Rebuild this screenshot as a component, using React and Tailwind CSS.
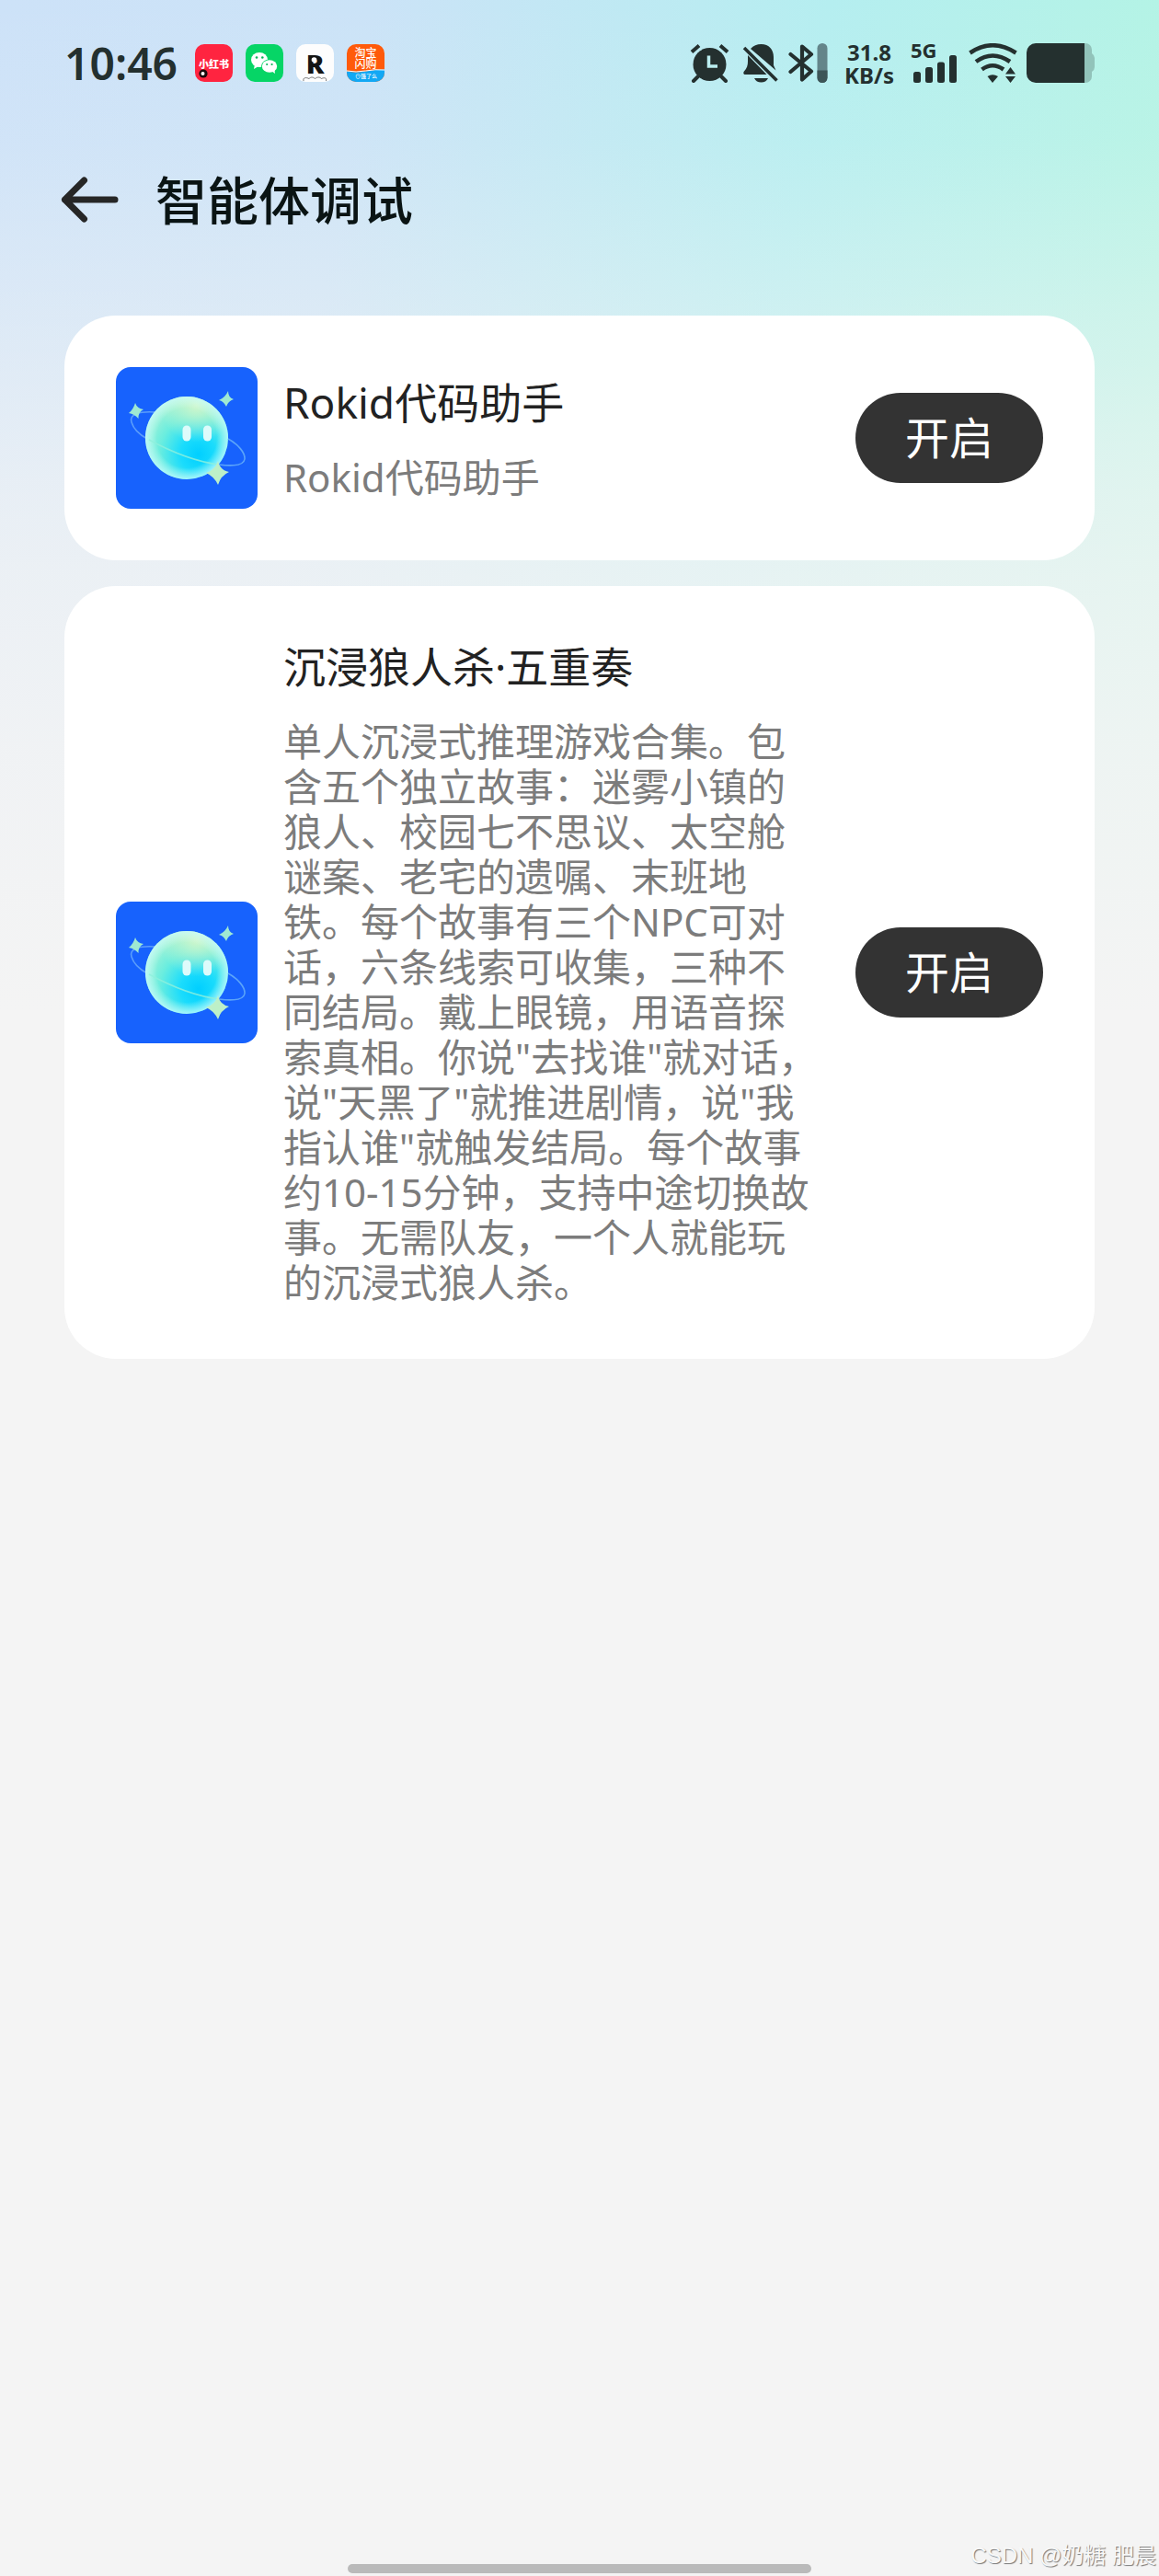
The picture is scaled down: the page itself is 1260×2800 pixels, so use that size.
const agents = [
  {
    id: 'code-helper',
    name: 'Rokid代码助手',
    description: 'Rokid代码助手',
  },
  {
    id: 'werewolf',
    name: '沉浸狼人杀·五重奏',
    description:
      '单人沉浸式推理游戏合集。包含五个独立故事：迷雾小镇的狼人、校园七不思议、太空舱谜案、老宅的遗嘱、末班地铁。每个故事有三个NPC可对话，六条线索可收集，三种不同结局。戴上眼镜，用语音探索真相。你说"去找谁"就对话，说"天黑了"就推进剧情，说"我指认谁"就触发结局。每个故事约10-15分钟，支持中途切换故事。无需队友，一个人就能玩的沉浸式狼人杀。',
  },
];

function WechatIcon() {
  return (
    <svg viewBox="0 0 41 41" className="h-[41px] w-[41px]" fill="none">
      <rect width="41" height="41" rx="10" fill="#06d566" />
      <path d="M10 22l-1 5 5-3z" fill="#fff" />
      <ellipse cx="15" cy="17" rx="9" ry="8" fill="#fff" />
      <ellipse cx="26" cy="24" rx="9" ry="7.6" fill="#06d566" />
      <ellipse cx="26" cy="24" rx="8.2" ry="6.8" fill="#fff" />
      <path d="M28 29l4 3-.6-5z" fill="#fff" />
      <circle cx="12" cy="14.500" r="1.300" fill="#06b458" />
      <circle cx="18.300" cy="14.500" r="1.300" fill="#06b458" />
      <circle cx="23.200" cy="22" r="1.100" fill="#06b458" />
      <circle cx="28.600" cy="22" r="1.100" fill="#06b458" />
    </svg>
  );
}

function AppIcons() {
  return (
    <div className="flex gap-[14px]">
      <svg viewBox="0 0 41 41" className="h-[41px] w-[41px]">
        <rect width="41" height="41" rx="10" fill="#ff2440" />
        <text x="20.500" y="26" textAnchor="middle" fontSize="11" fontWeight="900" fill="#fff" fontFamily="Noto Sans CJK SC, sans-serif">小红书</text>
        <circle cx="9" cy="32" r="4.600" fill="#1c0a0c" />
        <circle cx="8.500" cy="32" r="2" fill="#fff" />
      </svg>
      <WechatIcon />
      <svg viewBox="0 0 41 41" className="h-[41px] w-[41px]">
        <rect width="41" height="41" rx="10" fill="#fdfdfd" />
        <text x="20.500" y="31.500" textAnchor="middle" fontSize="29" fontWeight="900" fill="#141414" fontFamily="Noto Sans, sans-serif">R</text>
        <circle cx="19.500" cy="17" r="2.800" fill="#fff" />
        <path d="M8 40c-1-4 3-4 6-2.500 2-2 4-2 6.500 0 2.500-2 5-2 7 0 3-1.500 6-1 5 2.500" fill="none" stroke="#555" strokeWidth=".8" />
      </svg>
      <svg viewBox="0 0 41 41" className="h-[41px] w-[41px]">
        <defs>
          <clipPath id="shop-clip"><rect width="41" height="41" rx="10" /></clipPath>
        </defs>
        <g clipPath="url(#shop-clip)" fontFamily="Noto Sans CJK SC, sans-serif" fill="#fff" textAnchor="middle">
          <rect width="41" height="41" fill="#ff5a0a" />
          <path d="M0 29.500q10 2 20.500 0t20.500-2V41H0z" fill="#12a8f4" />
          <path d="M0 29q10 2 20.500 0t20.500-1" fill="none" stroke="#fff" strokeWidth="1" />
          <text x="20.500" y="14" fontSize="12" fontWeight="500">淘宝</text>
          <text x="20.500" y="26" fontSize="12" fontWeight="500">闪购</text>
          <text x="21" y="37" fontSize="6" fontWeight="500">⊙饿了么</text>
        </g>
      </svg>
    </div>
  );
}

function SystemIcons() {
  return (
    <div className="flex items-center text-[#24302f]">
      <svg viewBox="0 0 43 43" className="h-[43px] w-[43px]" fill="none" stroke="currentColor" strokeWidth="4">
        <circle cx="21.500" cy="23" r="18" fill="currentColor" stroke="none" />
        <path d="M2 9.500L10 2.500M41 9.500L33 2.500" />
        <path d="M9 36l-5 5M34 36l5 5" strokeLinecap="round" />
        <path d="M20.500 13.500V25H30" stroke="#bbeef0" strokeWidth="3.500" />
      </svg>
      <svg viewBox="0 0 40 43" className="ml-[14px] h-[43px] w-10" fill="currentColor">
        <path d="M9 6C12 2.500 16 1 20.500 1 29 1 34 7 34 15v9l2.500 5.500z" />
        <path d="M6 13L26.500 34H3.500C1 34 .8 32 2 30.500 5 27 6 24 6 20z" />
        <path d="M13 38h15c-1.500 3-4 4.500-7.500 4.500S14.500 41 13 38z" />
        <path d="M2 5L37.500 40.500" stroke="currentColor" strokeWidth="3.600" />
      </svg>
      <svg viewBox="0 0 43 43" className="ml-[10px] h-[43px] w-[43px]" fill="none">
        <path d="M2.500 12L25 30.500 15 39.500V3.500L25 12 2.500 31" stroke="currentColor" strokeWidth="4.200" strokeLinejoin="round" strokeLinecap="round" />
        <rect x="31.500" y="0" width="11" height="43" rx="5.500" fill="#64858a" />
        <path d="M31.500 29.500h11v8a5.500 5.500 0 0 1-11 0z" fill="#3d5557" />
      </svg>
      <div className="ml-[18px] flex flex-col text-center text-[24px] leading-[25px] font-bold">
        <span>31.8</span>
        <span>KB/s</span>
      </div>
      <svg viewBox="0 -8 52 59" className="ml-[18px] h-[59px] w-[52px]" fill="currentColor">
        <text x="0" y="16" fontSize="22" fontWeight="700" fontFamily="Noto Sans, sans-serif">5G</text>
        <rect x="3" y="31" width="8" height="12" rx="2.500" />
        <rect x="16" y="26" width="8" height="17" rx="2.500" />
        <rect x="29" y="20.500" width="8" height="22.500" rx="2.500" />
        <rect x="42" y="13" width="8" height="30" rx="2.500" />
      </svg>
      <svg viewBox="0 0 53 43" className="ml-[11px] h-[43px] w-[53px]" fill="none" stroke="currentColor" strokeWidth="4.600">
        <path d="M1.500 10.500Q26 -6 51.500 10.500" />
        <path d="M8 20Q26 7 45 20" />
        <path d="M14.500 28.500Q26 20 38 28.500" />
        <path d="M20.500 36Q26 32.500 32 36L26 43z" fill="currentColor" stroke="none" />
        <path d="M40 33.500L45.500 26 51 33.500zM40 36h11l-5.500 7z" fill="currentColor" stroke="none" />
      </svg>
      <svg viewBox="0 0 74 43" className="ml-[10px] h-[43px] w-[74px]">
        <path d="M60 0h4a7 7 0 0 1 7 7v4q3 2 3 5v10q0 3-3 5v5a7 7 0 0 1-7 7h-4z" fill="#92c3ba" />
        <path d="M10 0h53v43H10A10 10 0 0 1 0 33V10A10 10 0 0 1 10 0z" fill="currentColor" />
      </svg>
    </div>
  );
}

function AgentAvatar({ id }) {
  const ball = `ball-${id}`;
  const rim = `rim-${id}`;
  const top = `top-${id}`;
  return (
    <svg viewBox="0 0 154 154" className="h-[154px] w-[154px] shrink-0 rounded-2xl bg-[#1762fd]" fill="none">
      <defs>
        <radialGradient id={ball} cx=".64" cy=".7" r=".72">
          <stop offset="0" stopColor="#00cfff" />
          <stop offset=".3" stopColor="#1bdcfc" />
          <stop offset=".65" stopColor="#6aeddf" />
          <stop offset="1" stopColor="#a5f3d6" />
        </radialGradient>
        <radialGradient id={rim} cx=".5" cy=".5" r=".5">
          <stop offset=".72" stopColor="#d8fff6" stopOpacity="0" />
          <stop offset="1" stopColor="#c8fbff" stopOpacity=".75" />
        </radialGradient>
        <radialGradient id={top} cx=".62" cy=".1" r=".45">
          <stop offset="0" stopColor="#d9f7c9" stopOpacity=".9" />
          <stop offset="1" stopColor="#d9f7c9" stopOpacity="0" />
        </radialGradient>
      </defs>
      <path d="M42 49C26 48 14 51 17 60c2 7 8 13 17 18" stroke="#5b9dfb" strokeWidth="1.600" />
      <circle cx="77" cy="77" r="45" fill={`url(#${ball})`} />
      <circle cx="77" cy="77" r="45" fill={`url(#${top})`} />
      <circle cx="77" cy="77" r="45" fill={`url(#${rim})`} />
      <path d="M36 79C60 92 88 103 112 106" stroke="#8ff0dc" strokeWidth="1.600" opacity=".8" />
      <path d="M112 106c16 2 27 1 28-6 .5-7-7-16-18-22" stroke="#5ba4f9" strokeWidth="1.600" />
      <rect x="72.500" y="63.500" width="9" height="17" rx="4.500" fill="#ddfbfb" />
      <rect x="95" y="63.500" width="9" height="17" rx="4.500" fill="#ddfbfb" />
      <g fill="#9fe9d2">
        <path d="M21 39q2 6 9 7-6 3-5.500 10Q20 51 14 50q5-4 7-11z" />
        <path d="M122 26q0 7 6 9-6 2-8 8-3-6-8-7 7-3 10-10z" />
        <path d="M111 102q2 10 12 12-9 4-12 14-4-9-13-13 10-3 13-13z" fill="#bdf0c8" />
      </g>
    </svg>
  );
}

function AgentCard({ agent }) {
  return (
    <li className="flex items-center rounded-[56px] bg-white p-14">
      <AgentAvatar id={agent.id} />
      <div className="mx-7 flex min-w-0 flex-1 flex-col gap-[26px] pr-[10px] pb-[3px]">
        <h2 className="text-[46px] leading-[62px] text-[#222]">{agent.name}</h2>
        <p className="text-[42px] leading-[49px] text-[#7c7c7c]">{agent.description}</p>
      </div>
      <button
        type="button"
        className="shrink-0 cursor-pointer rounded-full bg-[#333] px-[54px] py-[14px] text-[48px] leading-[70px] text-white"
      >
        开启
      </button>
    </li>
  );
}

export default function App() {
  return (
    <div
      lang="zh-CN"
      className="relative flex min-h-screen flex-col bg-[#f4f4f4] font-['Noto_Sans','Noto_Sans_CJK_SC',sans-serif]"
    >
      {/* Colour wash behind the header, fading into the page grey */}
      <div className="absolute inset-x-0 top-0 h-[1100px] bg-[linear-gradient(100deg,#cde2f8_0%,#cbe3f7_28%,#b5eef0_62%,#b3f6e0_100%)]">
        <div className="h-full bg-[linear-gradient(to_bottom,#f4f4f400_0%,#f4f4f41a_14%,#f4f4f466_31%,#f4f4f4b3_49%,#f4f4f4c8_57%,#f4f4f4e6_74%,#f4f4f4_100%)]" />
      </div>

      <div className="relative flex flex-1 flex-col">
        <div className="flex items-center justify-between px-[70px] pt-[39px]">
          <div className="flex items-center gap-[19px]">
            <time className="text-[48px] leading-[43px] font-semibold text-[#24302f]">10:46</time>
            <AppIcons />
          </div>
          <SystemIcons />
        </div>

        <header className="flex items-center gap-10 px-[66px] pt-[78px]">
          <button type="button" aria-label="返回" className="cursor-pointer">
            <svg viewBox="0 0 63 50" className="h-[50px] w-[63px]" fill="none" stroke="#262626" strokeWidth="7" strokeLinecap="round" strokeLinejoin="round">
              <path d="M59 25H4.500M25.500 4L4.500 25l21 21" />
            </svg>
          </button>
          <h1 className="text-[56px] leading-[82px] font-medium text-[#0a1414]">智能体调试</h1>
        </header>

        <main className="px-[70px] pt-[85px]">
          <ul className="flex flex-col gap-7">
            {agents.map((agent) => (
              <AgentCard key={agent.id} agent={agent} />
            ))}
          </ul>
        </main>

        <footer className="mt-auto pb-[3px]">
          <div className="mx-auto h-[10px] w-2/5 rounded-full bg-[#bababa]" />
        </footer>
      </div>

      <span className="absolute right-[3px] bottom-1 text-[24px] leading-9 text-[#f8f8f8] [text-shadow:1px_1px_1px_#777] font-['Liberation_Sans','Noto_Sans_CJK_SC',sans-serif]">
        CSDN @奶糖 肥晨
      </span>
    </div>
  );
}
